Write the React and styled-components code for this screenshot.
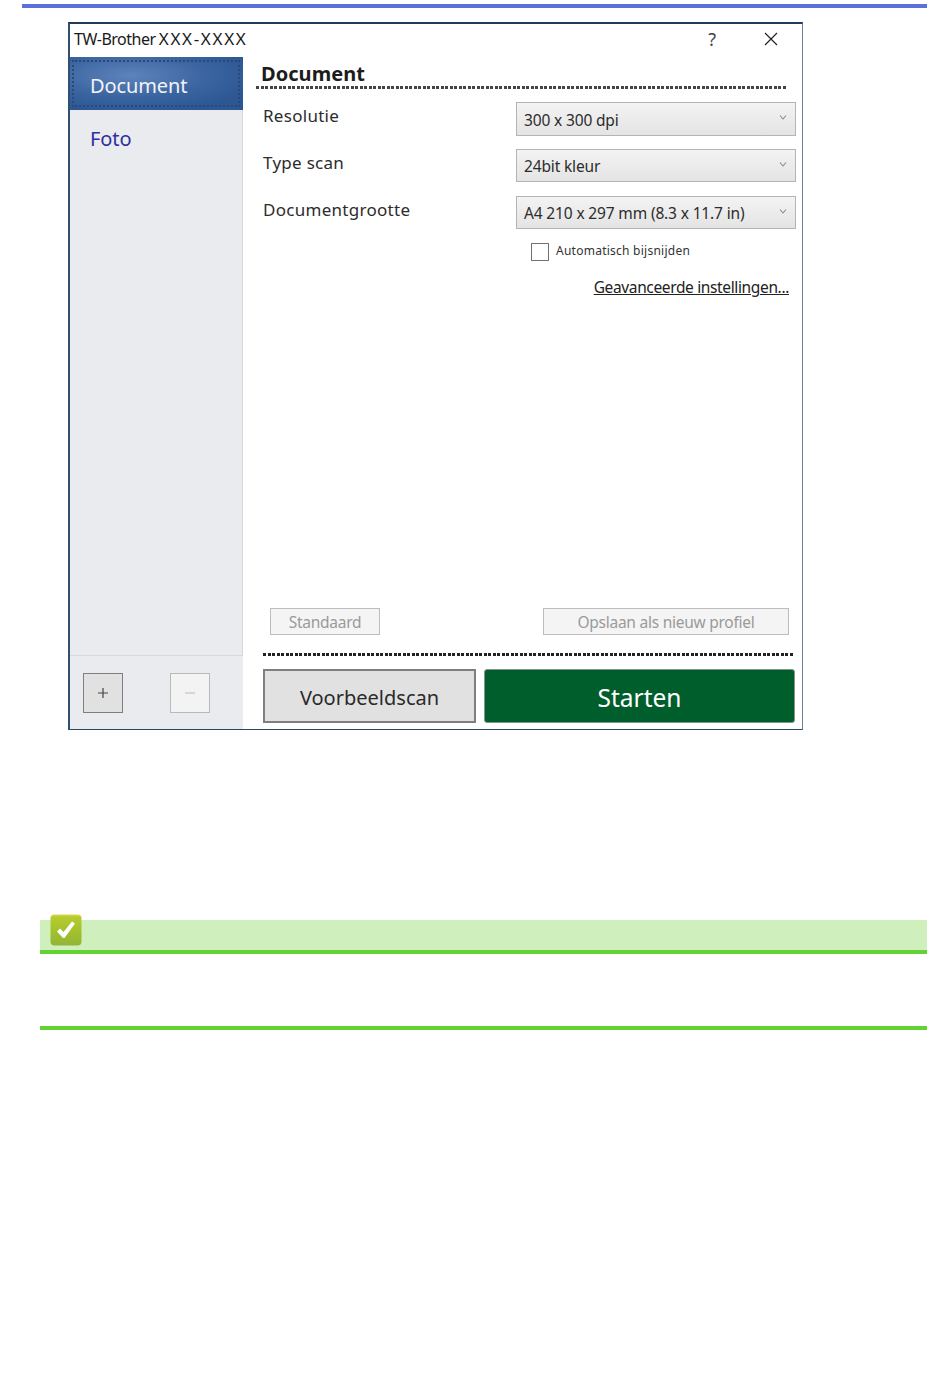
import React from "react";
import styled, { createGlobalStyle } from "styled-components";

const Global = createGlobalStyle`
  html, body { margin: 0; padding: 0; background: #fff; }
  body { font-family: "Noto Sans", "Open Sans", Arial, sans-serif; color: #222; }
  * { box-sizing: border-box; }
`;

const dashes = (color) =>
  `repeating-linear-gradient(90deg, ${color} 0 3px, transparent 3px 5px, ${color} 5px 8px, transparent 8px 9px)`;

const Page = styled.div`
  width: 950px;
  height: 1387px;
  padding: 4px 23px 0 22px;
  overflow: hidden;
`;
const TopRule = styled.div`
  height: 4px;
  background: #5b70d9;
`;
const Win = styled.section`
  width: 735px;
  height: 708px;
  margin: 14px 0 0 46px;
  display: flex;
  flex-direction: column;
  background: #fff;
  border-top: 2px solid #1f3a5a;
  border-left: 2px solid #2f4f73;
  border-right: 1px solid #6c84a3;
  border-bottom: 1px solid #2a4565;
`;
const TitleBar = styled.header`
  height: 33px;
  flex: none;
  display: flex;
  align-items: center;
  padding: 0 24px 4px 4px;
  font-size: 16px;
  letter-spacing: -0.5px;
  color: #1a1a1a;
`;
const TitleText = styled.span`
  flex: 1;
`;
const TitleCode = styled.span`
  margin-left: -3px;
  font-size: 17px;
  letter-spacing: 1.7px;
`;
const HelpMark = styled.span`
  width: 16px;
  margin-right: 44px;
  text-align: center;
  font-size: 18px;
  line-height: 22px;
  color: #444;
`;
const WinBody = styled.div`
  flex: 1;
  min-height: 0;
  display: grid;
  grid-template-columns: 173px 1fr;
`;
const Sidebar = styled.nav`
  display: flex;
  flex-direction: column;
  background: #e9ebef;
`;
const SideList = styled.div`
  flex: 1;
  border-right: 1px solid #d5d7da;
  border-bottom: 1px solid #d8d9dc;
`;
const SideItem = styled.div`
  position: relative;
  height: 53px;
  display: flex;
  align-items: center;
  margin-right: -1px;
  padding: 4px 0 0 20px;
  font-size: 20px;
  letter-spacing: -0.1px;
  color: #2f2f9d;
`;
const ActiveSideItem = styled(SideItem)`
  color: #f2f4fa;
  background: radial-gradient(ellipse 75% 70% at 35% 35%, #5f83bb 0%, #3a649f 60%, #2c5792 100%);
  &::after {
    content: "";
    position: absolute;
    inset: 3px 3px 3px 2px;
    border: 2px dotted #2a4878;
  }
`;
const SideFoot = styled.div`
  height: 73px;
  flex: none;
  display: flex;
  justify-content: space-between;
  padding: 17px 33px 0 13px;
`;
const SquareBtn = styled.div`
  width: 40px;
  height: 40px;
  display: flex;
  align-items: center;
  justify-content: center;
  border: 1.5px solid ${(p) => (p.$disabled ? "#b9b9b9" : "#7f7f7f")};
  background: ${(p) => (p.$disabled ? "#f3f3f3" : "#e1e1e1")};
`;
const Main = styled.main`
  display: flex;
  flex-direction: column;
  padding-right: 7px;
  min-width: 0;
`;
const Heading = styled.h2`
  margin: 0;
  padding: 4px 0 0 18px;
  font-size: 20px;
  line-height: 25px;
  font-weight: 700;
  letter-spacing: 0.05px;
  color: #1c1c1c;
`;
const HeadingRule = styled.div`
  margin: 0 0 13px 13px;
  width: 530px;
  height: 3px;
  background: ${dashes("#444")};
`;
const FormRows = styled.div`
  display: flex;
  flex-direction: column;
  padding-left: 20px;
`;
const FormRow = styled.div`
  display: grid;
  grid-template-columns: 253px 280px;
  align-items: start;
  height: 47px;
`;
const Label = styled.label`
  font-size: 17px;
  line-height: 28px;
  letter-spacing: 0.28px;
  color: #2c2c2c;
`;
const Select = styled.div`
  height: ${(p) => p.$h}px;
  display: flex;
  align-items: center;
  justify-content: space-between;
  padding: 1px 8px 0 7px;
  border: 1.5px solid #b4b4b4;
  background: linear-gradient(#f3f3f3, #e4e4e4);
  font-size: 15.5px;
  letter-spacing: -0.15px;
  color: #2c2c2c;
`;
const CheckRow = styled.div`
  display: flex;
  align-items: center;
  gap: 7px;
  margin: 0 0 0 288px;
  height: 18px;
  font-size: 12px;
  letter-spacing: 0.25px;
  color: #333;
`;
const CheckLabel = styled.span`
  padding-bottom: 3px;
`;
const Box = styled.span`
  width: 18px;
  height: 18px;
  background: #fff;
  border: 1px solid #707070;
`;
const LinkLine = styled.div`
  display: flex;
  justify-content: flex-end;
  margin: 15px 6px 0 0;
`;
const AdvLink = styled.a`
  font-size: 15.5px;
  line-height: 22px;
  letter-spacing: -0.36px;
  color: #222;
  text-decoration: underline;
`;
const Spacer = styled.div`
  flex: 1;
`;
const ProfileRow = styled.div`
  display: flex;
  justify-content: space-between;
  padding: 0 6px 0 27px;
`;
const GhostBtn = styled.div`
  width: ${(p) => p.$w}px;
  height: 27px;
  display: flex;
  align-items: center;
  justify-content: center;
  background: #f4f4f4;
  border: 1.5px solid #bdbdbd;
  font-size: 15.5px;
  letter-spacing: -0.25px;
  color: #9a9a9a;
`;
const DottedRule = styled.div`
  margin: 18px 0 13px 20px;
  width: 530px;
  height: 3px;
  background: ${dashes("#222")};
`;
const ActionRow = styled.div`
  display: flex;
  gap: 8px;
  padding-left: 20px;
  margin-bottom: 6px;
`;
const PreviewBtn = styled.div`
  width: 213px;
  height: 54px;
  display: flex;
  align-items: center;
  justify-content: center;
  padding-top: 2px;
  background: #e1e1e1;
  border: 2px solid #7f7f7f;
  font-size: 20px;
  color: #2a2a2a;
`;
const StartBtn = styled.div`
  width: 311px;
  height: 54px;
  display: flex;
  align-items: center;
  justify-content: center;
  padding-top: 2px;
  background: #005e2c;
  border: 1.5px solid #87938b;
  border-radius: 3px;
  font-size: 24.5px;
  color: #fff;
`;
const NoteHead = styled.div`
  position: relative;
  height: 34px;
  margin: 190px 0 0 18px;
  background: #cff0bd;
  border-bottom: 4px solid #63d334;
`;
const NoteIcon = styled.svg`
  position: absolute;
  left: 10px;
  top: -6px;
`;
const NoteBody = styled.div`
  height: 76px;
  margin-left: 18px;
  border-bottom: 4px solid #63d334;
`;

const Chevron = () => (
  <svg width="8" height="7" viewBox="0 0 8 7" style={{ marginTop: -4 }}>
    <path d="M1 1.5 L4 5 L7 1.5" fill="none" stroke="#8a8a8a" strokeWidth="1.1" />
  </svg>
);

const CloseIcon = () => (
  <svg width="14" height="14" viewBox="0 0 14 14">
    <path d="M1 1 L13 13 M13 1 L1 13" stroke="#222" strokeWidth="1.2" fill="none" />
  </svg>
);

const PlusIcon = () => (
  <svg width="10" height="10" viewBox="0 0 10 10">
    <path d="M0 5 H10 M5 0 V10" stroke="#444" strokeWidth="1.2" />
  </svg>
);

const MinusIcon = () => (
  <svg width="10" height="10" viewBox="0 0 10 10">
    <path d="M0 5 H10" stroke="#c4c4c4" strokeWidth="1.2" />
  </svg>
);

const CheckBadge = () => (
  <NoteIcon width="32" height="32" viewBox="0 0 32 32">
    <defs>
      <linearGradient id="badge" x1="0" y1="0" x2="0" y2="1">
        <stop offset="0" stopColor="#dcd94a" />
        <stop offset="0.08" stopColor="#b6cb30" />
        <stop offset="0.55" stopColor="#a2c12c" />
        <stop offset="1" stopColor="#93b437" />
      </linearGradient>
    </defs>
    <rect x="0.5" y="0.5" width="31" height="31" rx="4" fill="url(#badge)" />
    <path d="M7 17.5 L10 14.5 L13.5 18 L22 7.5 L25 9.5 L14.5 24 L13 24 Z" fill="#fff" />
  </NoteIcon>
);

const rows = [
  ["Resolutie", "300 x 300 dpi", 34],
  ["Type scan", "24bit kleur", 33],
  ["Documentgrootte", "A4 210 x 297 mm (8.3 x 11.7 in)", 33],
];

export default function App() {
  return (
    <Page>
      <Global />
      <TopRule />
      <Win>
        <TitleBar>
          <TitleText>
            TW-Brother<TitleCode> XXX-XXXX</TitleCode>
          </TitleText>
          <HelpMark>?</HelpMark>
          <CloseIcon />
        </TitleBar>
        <WinBody>
          <Sidebar>
            <SideList>
              <ActiveSideItem>Document</ActiveSideItem>
              <SideItem>Foto</SideItem>
            </SideList>
            <SideFoot>
              <SquareBtn><PlusIcon /></SquareBtn>
              <SquareBtn $disabled><MinusIcon /></SquareBtn>
            </SideFoot>
          </Sidebar>
          <Main>
            <Heading>Document</Heading>
            <HeadingRule />
            <FormRows>
              {rows.map(([label, value, h]) => (
                <FormRow key={label}>
                  <Label>{label}</Label>
                  <Select $h={h}>
                    <span>{value}</span>
                    <Chevron />
                  </Select>
                </FormRow>
              ))}
            </FormRows>
            <CheckRow>
              <Box />
              <CheckLabel>Automatisch bijsnijden</CheckLabel>
            </CheckRow>
            <LinkLine>
              <AdvLink>Geavanceerde instellingen...</AdvLink>
            </LinkLine>
            <Spacer />
            <ProfileRow>
              <GhostBtn $w={110}>Standaard</GhostBtn>
              <GhostBtn $w={246}>Opslaan als nieuw profiel</GhostBtn>
            </ProfileRow>
            <DottedRule />
            <ActionRow>
              <PreviewBtn>Voorbeeldscan</PreviewBtn>
              <StartBtn>Starten</StartBtn>
            </ActionRow>
          </Main>
        </WinBody>
      </Win>
      <NoteHead>
        <CheckBadge />
      </NoteHead>
      <NoteBody />
    </Page>
  );
}
